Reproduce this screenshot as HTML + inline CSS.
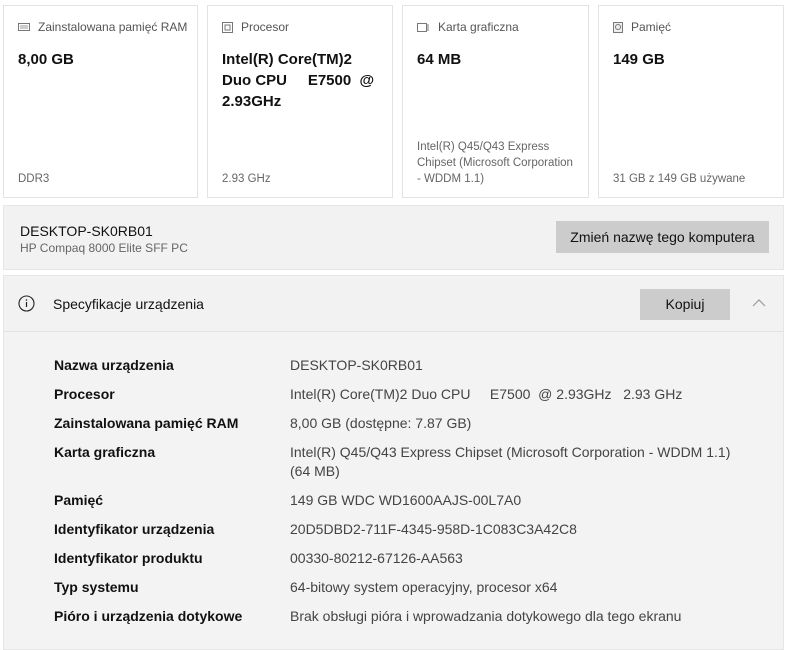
<!DOCTYPE html>
<html><head><meta charset="utf-8"><style>
*{margin:0;padding:0;box-sizing:border-box}
body{width:789px;height:645px;overflow:hidden;background:#fff;font-family:"Liberation Sans","DejaVu Sans",sans-serif;color:#000;position:relative}
.card{position:absolute;top:5px;height:193px;background:#fff;border:1px solid #e3e3e3}
.ct{position:absolute;left:14px;top:14px;font-size:12px;color:#555;display:flex;align-items:center;gap:8px;white-space:nowrap}
.cv{position:absolute;left:14px;top:43px;font-size:15px;font-weight:bold;line-height:21px;color:#111}
.cb{position:absolute;left:14px;bottom:10px;font-size:11.5px;color:#666;line-height:16px}
.p{position:absolute;left:3px;width:781px;background:#f2f2f2;border:1px solid #e6e6e6}
.btn{position:absolute;background:#cccccc;font-size:14px;color:#111;text-align:center}
.row{position:absolute;left:54px;font-size:14px;line-height:19px}
.row b{position:absolute;left:0;white-space:nowrap;color:#111}
.row span{position:absolute;left:236px;width:460px;color:#444;white-space:nowrap}
</style></head><body>
<div class="card" style="left:3px;width:195px">
 <div class="ct"><svg width="12" height="8"><rect x="0.5" y="0.5" width="11" height="7" fill="none" stroke="#777"/><path d="M2 3h8M2 5h8" stroke="#999"/></svg>Zainstalowana pamięć RAM</div>
 <div class="cv">8,00 GB</div><div class="cb">DDR3</div></div>
<div class="card" style="left:207px;width:186px">
 <div class="ct"><svg width="11" height="11"><rect x="0.5" y="0.5" width="10" height="10" fill="none" stroke="#777"/><rect x="3" y="3" width="5" height="5" fill="none" stroke="#777"/></svg>Procesor</div>
 <div class="cv">Intel(R) Core(TM)2<br>Duo CPU &nbsp;&nbsp;&nbsp; E7500 &nbsp;@<br>2.93GHz</div><div class="cb">2.93 GHz</div></div>
<div class="card" style="left:402px;width:187px">
 <div class="ct"><svg width="13" height="9"><rect x="0.5" y="0.5" width="9" height="8" fill="none" stroke="#777"/><path d="M11 1v7" stroke="#777"/></svg>Karta graficzna</div>
 <div class="cv">64 MB</div><div class="cb">Intel(R) Q45/Q43 Express<br>Chipset (Microsoft Corporation<br>- WDDM 1.1)</div></div>
<div class="card" style="left:598px;width:186px">
 <div class="ct"><svg width="10" height="11"><rect x="0.5" y="0.5" width="9" height="10" fill="#eee" stroke="#777"/><circle cx="5" cy="5" r="2.5" fill="none" stroke="#777"/></svg>Pamięć</div>
 <div class="cv">149 GB</div><div class="cb">31 GB z 149 GB używane</div></div>

<div class="p" style="top:205px;height:65px">
 <div style="position:absolute;left:16px;top:17px;font-size:14px;color:#111">DESKTOP-SK0RB01</div>
 <div style="position:absolute;left:16px;top:35px;font-size:12px;color:#666">HP Compaq 8000 Elite SFF PC</div>
 <div class="btn" style="left:552px;top:15px;width:213px;height:32px;line-height:32px">Zmień nazwę tego komputera</div>
</div>
<div class="p" style="top:275px;height:375px;background:#f3f3f3">
 <div style="position:absolute;left:0;top:0;width:100%;height:56px;border-bottom:1px solid #e2e2e2;background:#f2f2f2"></div>
 <svg style="position:absolute;left:14px;top:19px" width="17" height="17"><circle cx="8.5" cy="8.5" r="7.5" fill="none" stroke="#222" stroke-width="1.1"/><path d="M8.5 7v5" stroke="#222" stroke-width="1.2"/><circle cx="8.5" cy="5" r=".8" fill="#222"/></svg>
 <div style="position:absolute;left:49px;top:20px;font-size:14px;color:#111">Specyfikacje urządzenia</div>
 <div class="btn" style="left:636px;top:13px;width:90px;height:31px;line-height:31px">Kopiuj</div>
 <svg style="position:absolute;left:748px;top:22px" width="14" height="9"><path d="M1 8l6-6 6 6" fill="none" stroke="#999" stroke-width="1.2"/></svg>
</div>
<div class="row" style="top:356px"><b>Nazwa urządzenia</b><span>DESKTOP-SK0RB01</span></div>
<div class="row" style="top:385px"><b>Procesor</b><span>Intel(R) Core(TM)2 Duo CPU &nbsp;&nbsp;&nbsp; E7500 &nbsp;@ 2.93GHz &nbsp; 2.93 GHz</span></div>
<div class="row" style="top:414px"><b>Zainstalowana pamięć RAM</b><span>8,00 GB (dostępne: 7.87 GB)</span></div>
<div class="row" style="top:443px"><b>Karta graficzna</b><span>Intel(R) Q45/Q43 Express Chipset (Microsoft Corporation - WDDM 1.1)<br>(64 MB)</span></div>
<div class="row" style="top:491px"><b>Pamięć</b><span>149 GB WDC WD1600AAJS-00L7A0</span></div>
<div class="row" style="top:520px"><b>Identyfikator urządzenia</b><span>20D5DBD2-711F-4345-958D-1C083C3A42C8</span></div>
<div class="row" style="top:549px"><b>Identyfikator produktu</b><span>00330-80212-67126-AA563</span></div>
<div class="row" style="top:578px"><b>Typ systemu</b><span>64-bitowy system operacyjny, procesor x64</span></div>
<div class="row" style="top:607px"><b>Pióro i urządzenia dotykowe</b><span>Brak obsługi pióra i wprowadzania dotykowego dla tego ekranu</span></div>
</body></html>
